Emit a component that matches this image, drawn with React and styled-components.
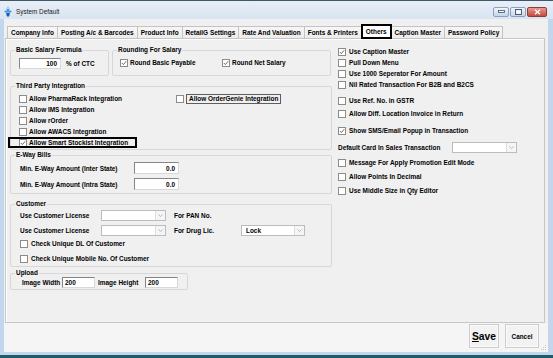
import React from 'react';
import styled, { createGlobalStyle, css } from 'styled-components';

const GlobalStyle = createGlobalStyle`
  html, body { margin: 0; padding: 0; }
  body { font-family: "Liberation Sans", Arial, sans-serif; background: #fff; }
`;

const FS = '6.45px';

const Window = styled.div`
  width: 553px;
  height: 358px;
  box-sizing: border-box;
  display: flex;
  flex-direction: column;
  background: #c3d6ec;
  border-top: 1px solid #3f5767;
  border-bottom: 3px solid #1c5d6c;
  overflow: hidden;
`;

const TitleBar = styled.div`
  height: 18px;
  flex: none;
  box-sizing: border-box;
  display: flex;
  align-items: center;
  padding: 3px 6px 0 3px;
  background: linear-gradient(#e8eef7, #d8e4f2);
`;

const Title = styled.span`
  flex: 1;
  margin-left: 3px;
  font-size: 6.4px;
  color: #1b1b1b;
`;

const Controls = styled.div`
  display: flex;
  gap: 1px;
`;

const CtlButton = styled.span`
  width: ${p => (p.$close ? 20 : 16)}px;
  height: 10px;
  box-sizing: border-box;
  border: 1px solid ${p => (p.$close ? '#8e3c35' : '#8ca1bd')};
  border-radius: 2px;
  background: ${p => (p.$close ? 'linear-gradient(#e89a91, #c54a3f)' : 'linear-gradient(#f1f5fa, #c6d5e8)')};
  display: flex;
  align-items: center;
  justify-content: center;
`;

const Frame = styled.div`
  flex: 1;
  display: flex;
  min-height: 0;
  padding: 0 5px 3px 4px;
`;

const Client = styled.div`
  flex: 1;
  display: flex;
  flex-direction: column;
  background: #f0f0f0;
`;

const TabStrip = styled.div`
  height: 19px;
  flex: none;
  display: flex;
  align-items: flex-end;
  padding-left: 3px;
`;

const Tab = styled.div`
  height: 12px;
  box-sizing: border-box;
  padding: 0 3px;
  margin-left: -1px;
  border: 1px solid #c3c3c3;
  border-bottom: 0;
  background: linear-gradient(#f7f7f7, #ececec);
  font-size: ${FS};
  font-weight: bold;
  line-height: 11px;
  white-space: nowrap;
  &:first-child { margin-left: 0; }
  ${p => p.$active && css`
    height: 15px;
    margin-bottom: -1px;
    border: 2px solid #000;
    background: #fff;
    line-height: 11px;
    position: relative;
    z-index: 1;
  `}
`;

const TabPage = styled.div`
  height: 285px;
  flex: none;
  box-sizing: border-box;
  margin: 0 3px 0 1px;
  border: 1px solid #c6c6c6;
  box-shadow: inset 1px 1px 0 #fff;
  background: #f0f0f0;
  display: grid;
  grid-template-columns: 322px 1fr;
  column-gap: 6px;
  align-items: start;
  padding: 7px 0 0 4px;
`;

const LeftCol = styled.div`
  display: flex;
  flex-direction: column;
`;

const RightCol = styled.div`
  display: flex;
  flex-direction: column;
`;

const GroupRow = styled.div`
  display: flex;
  gap: 3px;
`;

const Group = styled.fieldset`
  margin: ${p => p.$mt || 0}px 0 0;
  padding: 0 0 0 4px;
  border: 1px solid #d7d7d7;
  border-radius: 2px;
  height: ${p => p.$h}px;
  width: ${p => (p.$w ? `${p.$w}px` : 'auto')};
  box-sizing: border-box;
  min-width: 0;
`;

const Legend = styled.legend`
  margin: 0;
  padding: 0 1px;
  font-size: ${FS};
  font-weight: bold;
  line-height: 8px;
  color: #000;
`;

const Content = styled.div`
  padding: ${p => p.$pt || 0}px 0 0 ${p => p.$pl || 0}px;
`;

const Label = styled.span`
  font-size: ${FS};
  font-weight: bold;
  line-height: 11px;
  white-space: nowrap;
  color: #000;
  ${p => p.$focus && css`
    border: 1px solid #5e5e5e;
    padding: 0 2px;
    line-height: 8px;
  `}
`;

const CheckRow = styled.div`
  display: flex;
  align-items: center;
  gap: ${p => p.$gap || 2}px;
  height: 11px;
  margin-top: ${p => p.$mt || 0}px;
  ${p => p.$boxed && css`
    margin-left: -11px;
    padding-left: 11px;
    width: 129px;
    box-sizing: border-box;
    outline: 2px solid #000;
    outline-offset: -2px;
    position: relative;
  `}
`;

const Box = styled.span`
  width: 8px;
  height: 8px;
  flex: none;
  box-sizing: border-box;
  border: 1px solid #8b8b8b;
  background: #fff;
  display: flex;
  align-items: center;
  justify-content: center;
`;

const FieldRow = styled.div`
  display: grid;
  grid-template-columns: ${p => p.$cols};
  align-items: center;
  height: ${p => p.$h || 11}px;
  margin-top: ${p => p.$mt || 0}px;
`;

const Inline = styled.div`
  display: flex;
  align-items: center;
  gap: ${p => p.$gap || 0}px;
  height: 11px;
`;

const TextBox = styled.div`
  width: ${p => p.$w}px;
  height: ${p => p.$h || 11}px;
  box-sizing: border-box;
  background: #fff;
  border: 1px solid;
  border-color: #858585 #d9d9d9 #d9d9d9 #858585;
  padding: 0 ${p => (p.$right ? 3 : 2)}px;
  display: flex;
  align-items: center;
  justify-content: ${p => (p.$right ? 'flex-end' : 'flex-start')};
  font-size: ${FS};
  font-weight: bold;
`;

const ComboBox = styled.div`
  width: ${p => p.$w}px;
  height: 11px;
  box-sizing: border-box;
  background: #fff;
  border: 1px solid #bcbcbc;
  display: flex;
`;

const ComboText = styled.span`
  flex: 1;
  padding-left: 4px;
  font-size: ${FS};
  font-weight: bold;
  line-height: 9px;
`;

const ComboArrow = styled.span`
  width: 9px;
  border-left: 1px solid #dedede;
  background: #f5f5f5;
  display: flex;
  align-items: center;
  justify-content: center;
`;

const Footer = styled.div`
  flex: 1;
  display: flex;
  justify-content: flex-end;
  align-items: flex-start;
  gap: 6px;
  padding: 1px 9px 0 0;
  background: #f5f5f5;
  position: relative;
`;

const Button = styled.button`
  width: ${p => p.$w}px;
  height: 24px;
  padding: 0;
  box-sizing: border-box;
  border: 1px solid #cdcdcd;
  box-shadow: inset 0 0 0 1px #fafafa;
  background: #f2f2f2;
  font-family: "Liberation Sans", Arial, sans-serif;
  font-weight: bold;
  font-size: ${p => p.$fs}px;
  color: #000;
  u { text-decoration: underline; }
`;

const Grip = styled.svg`
  position: absolute;
  right: 1px;
  bottom: 1px;
`;

function Check({ checked }) {
  return (
    <Box>
      {checked && (
        <svg width="6" height="6" viewBox="0 0 6 6">
          <path d="M0.8 3 L2.4 4.6 L5.2 1.2" fill="none" stroke="#5a5a5a" strokeWidth="0.9" />
        </svg>
      )}
    </Box>
  );
}

function CheckItem({ label, checked, focus, ...rest }) {
  return (
    <CheckRow {...rest}>
      <Check checked={checked} />
      <Label $focus={focus}>{label}</Label>
    </CheckRow>
  );
}

function Combo({ w, value }) {
  return (
    <ComboBox $w={w}>
      <ComboText>{value}</ComboText>
      <ComboArrow>
        <svg width="5" height="3" viewBox="0 0 5 3">
          <path d="M0.5 0.5 L2.5 2.5 L4.5 0.5" fill="none" stroke="#a8a8a8" strokeWidth="0.8" />
        </svg>
      </ComboArrow>
    </ComboBox>
  );
}

const tabs = [
  'Company Info',
  'Posting A/c & Barcodes',
  'Product Info',
  'RetailG Settings',
  'Rate And Valuation',
  'Fonts & Printers',
  'Others',
  'Caption Master',
  'Password Policy',
];

const rightOptions = [
  { label: 'Use Caption Master', checked: true, mt: 0 },
  { label: 'Pull Down Menu', mt: 0 },
  { label: 'Use 1000 Seperator For Amount', mt: 0 },
  { label: 'Nil Rated Transaction For B2B and B2CS', mt: 0 },
  { label: 'Use Ref. No. in GSTR', mt: 5 },
  { label: 'Allow Diff. Location Invoice in Return', mt: 2 },
  { label: 'Show SMS/Email Popup in Transaction', checked: true, mt: 6 },
];

const rightOptions2 = [
  { label: 'Message For Apply Promotion Edit Mode', mt: 4 },
  { label: 'Allow Points In Decimal', mt: 3 },
  { label: 'Use Middle Size in Qty Editor', mt: 3 },
];

export default function App() {
  return (
    <>
      <GlobalStyle />
      <Window>
        <TitleBar>
          <svg width="10" height="11" viewBox="0 0 10 11">
            <path d="M5 0.5 L6.5 3 L5 4.5 L3.5 3 Z" fill="#2a6fd1" />
            <path d="M1 5 L5 4 L9 5 L7 7 L5 6 L3 7 Z" fill="#3ba0e8" />
            <path d="M3 7.5 L5 6.5 L7 7.5 L6 10.5 L4 10.5 Z" fill="#1d5bb8" />
            <circle cx="5" cy="2.2" r="0.9" fill="#e8f4ff" />
          </svg>
          <Title>System Default</Title>
          <Controls>
            <CtlButton>
              <svg width="7" height="3" viewBox="0 0 7 3"><rect x="0.5" y="0.5" width="6" height="2" fill="#fff" stroke="#3e4f66" strokeWidth="0.8" /></svg>
            </CtlButton>
            <CtlButton>
              <svg width="7" height="6" viewBox="0 0 7 6"><rect x="0.5" y="0.5" width="6" height="5" fill="none" stroke="#3e4f66" strokeWidth="0.9" /><rect x="1.3" y="1.6" width="4.4" height="3" fill="#fff" /></svg>
            </CtlButton>
            <CtlButton $close>
              <svg width="7" height="6" viewBox="0 0 7 6"><path d="M1 0.8 L6 5.2 M6 0.8 L1 5.2" stroke="#fff" strokeWidth="1.4" /></svg>
            </CtlButton>
          </Controls>
        </TitleBar>

        <Frame>
          <Client>
            <TabStrip>
              {tabs.map(t => (
                <Tab key={t} $active={t === 'Others'}>{t}</Tab>
              ))}
            </TabStrip>

            <TabPage>
              <LeftCol>
                <GroupRow>
                  <Group $h={30} $w={99}>
                    <Legend>Basic Salary Formula</Legend>
                    <Content $pt={4} $pl={4}>
                      <Inline $gap={5}>
                        <TextBox $w={42} $right>100</TextBox>
                        <Label>% of CTC</Label>
                      </Inline>
                    </Content>
                  </Group>
                  <Group $h={30} $w={219}>
                    <Legend>Rounding For Salary</Legend>
                    <Content $pt={3} $pl={3}>
                      <FieldRow $cols="102px auto">
                        <CheckItem label="Round Basic Payable" checked />
                        <CheckItem label="Round Net Salary" checked />
                      </FieldRow>
                    </Content>
                  </Group>
                </GroupRow>

                <Group $h={68} $mt={6}>
                  <Legend>Third Party Integration</Legend>
                  <Content $pt={3} $pl={4}>
                    <FieldRow $cols="157px auto">
                      <CheckItem label="Allow PharmaRack Integration" />
                      <CheckItem label="Allow OrderGenie Integration" focus />
                    </FieldRow>
                    <CheckItem label="Allow IMS Integration" />
                    <CheckItem label="Allow rOrder" />
                    <CheckItem label="Allow AWACS Integration" />
                    <CheckItem label="Allow Smart Stockist Integration" checked $boxed />
                  </Content>
                </Group>

                <Group $h={43} $mt={1}>
                  <Legend>E-Way Bills</Legend>
                  <Content $pt={3} $pl={5}>
                    <FieldRow $cols="114px auto" $h={12}>
                      <Label>Min. E-Way Amount (Inter State)</Label>
                      <TextBox $w={45} $h={12} $right>0.0</TextBox>
                    </FieldRow>
                    <FieldRow $cols="114px auto" $h={12} $mt={4}>
                      <Label>Min. E-Way Amount (Intra State)</Label>
                      <TextBox $w={45} $h={12} $right>0.0</TextBox>
                    </FieldRow>
                  </Content>
                </Group>

                <Group $h={67} $mt={6}>
                  <Legend>Customer</Legend>
                  <Content $pt={2} $pl={5}>
                    <FieldRow $cols="81px 65px 75px 64px">
                      <Label>Use Customer License</Label>
                      <Combo w={65} />
                      <Label style={{ paddingLeft: 8 }}>For PAN No.</Label>
                    </FieldRow>
                    <FieldRow $cols="81px 65px 75px 64px" $mt={4}>
                      <Label>Use Customer License</Label>
                      <Combo w={65} />
                      <Label style={{ paddingLeft: 8 }}>For Drug Lic.</Label>
                      <Combo w={64} value="Lock" />
                    </FieldRow>
                    <CheckItem label="Check Unique DL Of Customer" $gap={3} $mt={2} />
                    <CheckItem label="Check Unique Mobile No. Of Customer" $gap={3} $mt={4} />
                  </Content>
                </Group>

                <Group $h={21} $w={178} $mt={2}>
                  <Legend>Upload</Legend>
                  <Content $pl={7}>
                    <FieldRow $cols="40px 36px 47px auto">
                      <Label>Image Width</Label>
                      <TextBox $w={33}>200</TextBox>
                      <Label>Image Height</Label>
                      <TextBox $w={33}>200</TextBox>
                    </FieldRow>
                  </Content>
                </Group>
              </LeftCol>

              <RightCol>
                {rightOptions.map(o => (
                  <CheckItem key={o.label} label={o.label} checked={o.checked} $gap={3} $mt={o.mt} />
                ))}
                <FieldRow $cols="114px auto" $mt={6}>
                  <Label>Default Card In Sales Transaction</Label>
                  <Combo w={65} />
                </FieldRow>
                {rightOptions2.map(o => (
                  <CheckItem key={o.label} label={o.label} $gap={3} $mt={o.mt} />
                ))}
              </RightCol>
            </TabPage>

            <Footer>
              <Button $w={30} $fs={10.3}><u>S</u>ave</Button>
              <Button $w={34} $fs={6.4}>Cancel</Button>
              <Grip width="6" height="6" viewBox="0 0 6 6">
                <rect x="4" y="0" width="1" height="1" fill="#c8c8c8" />
                <rect x="2" y="2" width="1" height="1" fill="#c8c8c8" />
                <rect x="4" y="2" width="1" height="1" fill="#c8c8c8" />
                <rect x="0" y="4" width="1" height="1" fill="#c8c8c8" />
                <rect x="2" y="4" width="1" height="1" fill="#c8c8c8" />
                <rect x="4" y="4" width="1" height="1" fill="#c8c8c8" />
              </Grip>
            </Footer>
          </Client>
        </Frame>
      </Window>
    </>
  );
}
